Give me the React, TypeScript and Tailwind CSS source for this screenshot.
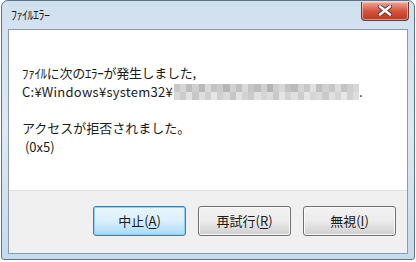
import React from "react";

const shades = [
  "#c9c9c9","#d6d6d6","#bdbdbd","#cfcfcf","#b8b8b8","#d9d9d9","#c4c4c4","#cbcbcb","#b5b5b5","#d2d2d2",
  "#c0c0c0","#dadada","#c6c6c6","#bcbcbc","#d0d0d0","#b3b3b3","#cdcdcd","#d8d8d8","#c2c2c2","#bababa",
  "#d4d4d4","#c8c8c8","#e0e0e0","#bfbfbf","#d1d1d1","#c5c5c5","#dcdcdc","#c3c3c3","#cecece","#d7d7d7",
];
const shades2 = [
  "#d8d8d8","#cccccc","#e2e2e2","#c8c8c8","#dedede","#d0d0d0","#e6e6e6","#cfcfcf","#dadada","#c6c6c6",
  "#e3e3e3","#d3d3d3","#cbcbcb","#e1e1e1","#d5d5d5","#dcdcdc","#c9c9c9","#e4e4e4","#d2d2d2","#dfdfdf",
  "#cdcdcd","#e5e5e5","#d6d6d6","#dbdbdb","#cacaca","#e0e0e0","#d4d4d4","#e7e7e7","#d1d1d1","#dddddd",
];

function Blur() {
  return (
    <span className="inline-flex flex-col align-middle w-[185px] h-[16px] overflow-hidden ml-[1px]">
      <span className="flex h-[8px]">
        {shades.map((c, i) => (
          <span key={i} className="w-[6.2px] h-full shrink-0" style={{ background: c }} />
        ))}
      </span>
      <span className="flex h-[8px]">
        {shades2.map((c, i) => (
          <span key={i} className="w-[6.2px] h-full shrink-0" style={{ background: c }} />
        ))}
      </span>
    </span>
  );
}

function Btn({ label, k, focused }: { label: string; k: string; focused?: boolean }) {
  return (
    <button
      className={
        "w-[93px] h-[30px] rounded-[3px] flex items-center justify-center text-[13px] text-[#1a1a1a] " +
        (focused
          ? "border border-[#3c7fb1] bg-gradient-to-b from-[#eaf6fd] via-[#d9f0fc] to-[#a7d9f5] shadow-[inset_0_0_0_1px_#8fd0ef]"
          : "border border-[#707070] bg-gradient-to-b from-[#f2f2f2] via-[#ebebeb] to-[#cfcfcf] shadow-[inset_0_0_0_1px_#fbfbfb]")
      }
    >
      <span>
        {label}(<span className="underline underline-offset-2">{k}</span>)
      </span>
    </button>
  );
}

export default function App() {
  return (
    <div
      className="w-[416px] h-[262px] overflow-hidden bg-white"
      style={{ fontFamily: '"Noto Sans CJK JP", "Noto Sans", sans-serif' }}
    >
      <div className="w-[414px] h-[260px] ml-[1px] rounded-t-[7px] rounded-b-[3px] border border-[#5d7388] bg-gradient-to-b from-[#cfe0ef] via-[#dde9f3] to-[#c5dbec] flex flex-col px-[6px] pb-[5px] relative">
        <div className="h-[28px] flex items-center justify-between shrink-0">
          <span className="text-[12px] text-[#1e1e1e] pl-[3px] tracking-[-0.5px]">ﾌｧｲﾙｴﾗｰ</span>
          <div className="w-[48px] h-[19px] -mt-[8px] mr-[-1px] rounded-b-[4px] border border-[#6e3a33] border-t-0 bg-gradient-to-b from-[#e8a797] via-[#d4553f] to-[#c0331e] flex items-center justify-center shadow-[inset_0_0_0_1px_rgba(255,210,200,0.6)]">
            <svg width="14" height="11" viewBox="0 0 14 11">
              <path d="M2 1.5 L12 9.5 M12 1.5 L2 9.5" stroke="#5a2a22" strokeWidth="4.2" strokeLinecap="round" />
              <path d="M2 1.5 L12 9.5 M12 1.5 L2 9.5" stroke="#ffffff" strokeWidth="2.6" strokeLinecap="round" />
            </svg>
          </div>
        </div>
        <div className="flex-1 flex flex-col border border-[#8a9bab] bg-white">
          <div className="flex-1 pl-[13px] pt-[33px] text-[13px] leading-[19px] text-[#1a1a1a]">
            <div className="tracking-[-0.3px]">ﾌｧｲﾙに次のｴﾗｰが発生しました,</div>
            <div className="flex items-center">
              <span className="tracking-[0.25px]">C:¥Windows¥system32¥</span>
              <Blur />
              <span>.</span>
            </div>
            <div className="h-[17px]" />
            <div>アクセスが拒否されました。</div>
            <div>&nbsp;(0x5)</div>
          </div>
          <div className="h-[63px] bg-[#f0f0f0] border-t border-[#dfdfdf] flex items-center justify-end gap-[12px] pr-[11px] pb-[2px]">
            <Btn label="中止" k="A" focused />
            <Btn label="再試行" k="R" />
            <Btn label="無視" k="I" />
          </div>
        </div>
      </div>
    </div>
  );
}
